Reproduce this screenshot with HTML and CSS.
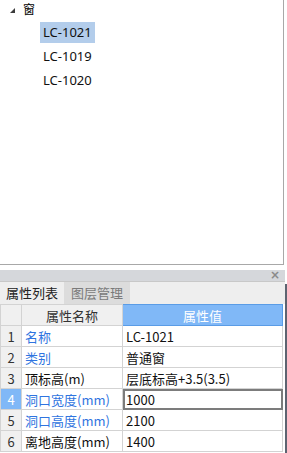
FILE: index.html
```html
<!DOCTYPE html>
<html>
<head>
<meta charset="utf-8">
<link rel="stylesheet" href="styles.css">
</head>
<body>
<div class="app">
  <div class="tree-panel">
    <div class="tree-root">
      <span class="toggle"></span>
      <span class="root-label">窗</span>
    </div>
    <ul class="tree-children">
      <li class="tree-item selected">LC-1021</li>
      <li class="tree-item">LC-1019</li>
      <li class="tree-item">LC-1020</li>
    </ul>
  </div>
  <div class="gap"></div>
  <div class="dock">
    <div class="dock-main">
      <div class="title-bar"><span class="close">×</span></div>
      <div class="tabs">
        <div class="tab active">属性列表</div>
        <div class="tab inactive">图层管理</div>
      </div>
      <table class="props">
        <colgroup><col class="c-num"><col class="c-name"><col class="c-val"></colgroup>
        <tr class="head"><th class="num"></th><th class="name">属性名称</th><th class="val">属性值</th></tr>
        <tr><td class="num">1</td><td class="name blue">名称</td><td class="val">LC-1021</td></tr>
        <tr><td class="num">2</td><td class="name blue">类别</td><td class="val">普通窗</td></tr>
        <tr><td class="num">3</td><td class="name">顶标高(m)</td><td class="val">层底标高+3.5(3.5)</td></tr>
        <tr class="current"><td class="num">4</td><td class="name blue">洞口宽度(mm)</td><td class="val edit">1000</td></tr>
        <tr><td class="num">5</td><td class="name blue">洞口高度(mm)</td><td class="val">2100</td></tr>
        <tr><td class="num">6</td><td class="name">离地高度(mm)</td><td class="val">1400</td></tr>
      </table>
    </div>
    <div class="side-bar"></div>
  </div>
</div>
</body>
</html>
```
FILE: styles.css
```css
html, body {
  margin: 0;
  padding: 0;
  background: #ffffff;
}
body {
  font-family: "Noto Sans CJK SC", "Noto Sans", sans-serif;
  font-size: 13px;
  color: #000;
  width: 287px;
  height: 453px;
  overflow: hidden;
}
.app {
  display: flex;
  flex-direction: column;
  height: 453px;
}
.tree-panel {
  width: 284px;
  height: 265px;
  box-sizing: border-box;
  border-right: 1px solid #a8a8a8;
  border-bottom: 1px solid #a8a8a8;
  background: #fff;
  flex: none;
}
.tree-root {
  display: flex;
  align-items: center;
  height: 18px;
  padding-left: 10px;
}
.toggle {
  width: 0;
  height: 0;
  border-left: 5px solid transparent;
  border-bottom: 5px solid #3c3c3c;
  margin-right: 8px;
  margin-top: 3px;
}
.root-label {
  font-size: 12px;
  line-height: 18px;
}
.tree-children {
  list-style: none;
  margin: 4px 0 0 0;
  padding: 0 0 0 40px;
}
.tree-item {
  display: block;
  width: max-content;
  height: 21px;
  line-height: 21px;
  padding: 0 3px;
  margin-bottom: 3px;
  font-family: "Noto Sans", "Noto Sans CJK SC", sans-serif;
  font-size: 13px;
  color: #111;
}
.tree-item.selected {
  background: #b3cdeb;
}
.gap {
  height: 5px;
  flex: none;
}
.dock {
  display: flex;
  flex: 1;
  min-height: 0;
}
.dock-main {
  width: 285px;
  flex: none;
  display: flex;
  flex-direction: column;
}
.side-bar {
  width: 2px;
  background: #5d6471;
  margin-top: 14px;
}
.title-bar {
  height: 11px;
  background: #d5d7db;
  display: flex;
  justify-content: flex-end;
  align-items: center;
  padding-right: 5px;
  flex: none;
}
.close {
  font-family: "DejaVu Sans", sans-serif;
  font-size: 12px;
  line-height: 11px;
  color: #8a8a8a;
  font-weight: bold;
}
.tabs {
  display: flex;
  height: 22px;
  background: #eeeeee;
  border-top: 1px solid #c8c8c8;
  flex: none;
}
.tab {
  height: 22px;
  line-height: 22px;
  font-size: 13px;
  text-align: center;
  white-space: nowrap;
  box-sizing: border-box;
}
.tab.active {
  color: #222;
  background: #eeeeee;
  width: 64px;
}
.tab.inactive {
  color: #7a7a7a;
  background: #dcdcdc;
  width: 66px;
}
.props {
  border-collapse: collapse;
  width: 282px;
  table-layout: fixed;
}
.c-num { width: 21px; }
.c-name { width: 101px; }
.c-val { width: 160px; }
.props th, .props td {
  height: 21px;
  padding: 0 0 0 3px;
  border: 1px solid #d3d3d3;
  font-weight: normal;
  font-size: 13px;
  line-height: 19px;
  white-space: nowrap;
  overflow: hidden;
  box-sizing: border-box;
}
.props th {
  text-align: center;
  padding: 0;
  color: #333;
  background: #f0f0f0;
}
.props th.val {
  background: #80b8f7;
  color: #fff;
  border-color: #5a9ce6;
}
.props td.num {
  text-align: center;
  padding: 0;
  background: #f0f0f0;
  color: #333;
}
.props td.val {
  background: #fff;
  color: #111;
}
.props td.name {
  color: #111;
  background: #fff;
}
.props td.name.blue {
  color: #2f74e0;
}
.props tr.current td.num {
  background: #80b8f7;
  color: #fff;
}
.props td.edit {
  outline: 2px solid #7c7c7c;
  outline-offset: -2px;
}
```
